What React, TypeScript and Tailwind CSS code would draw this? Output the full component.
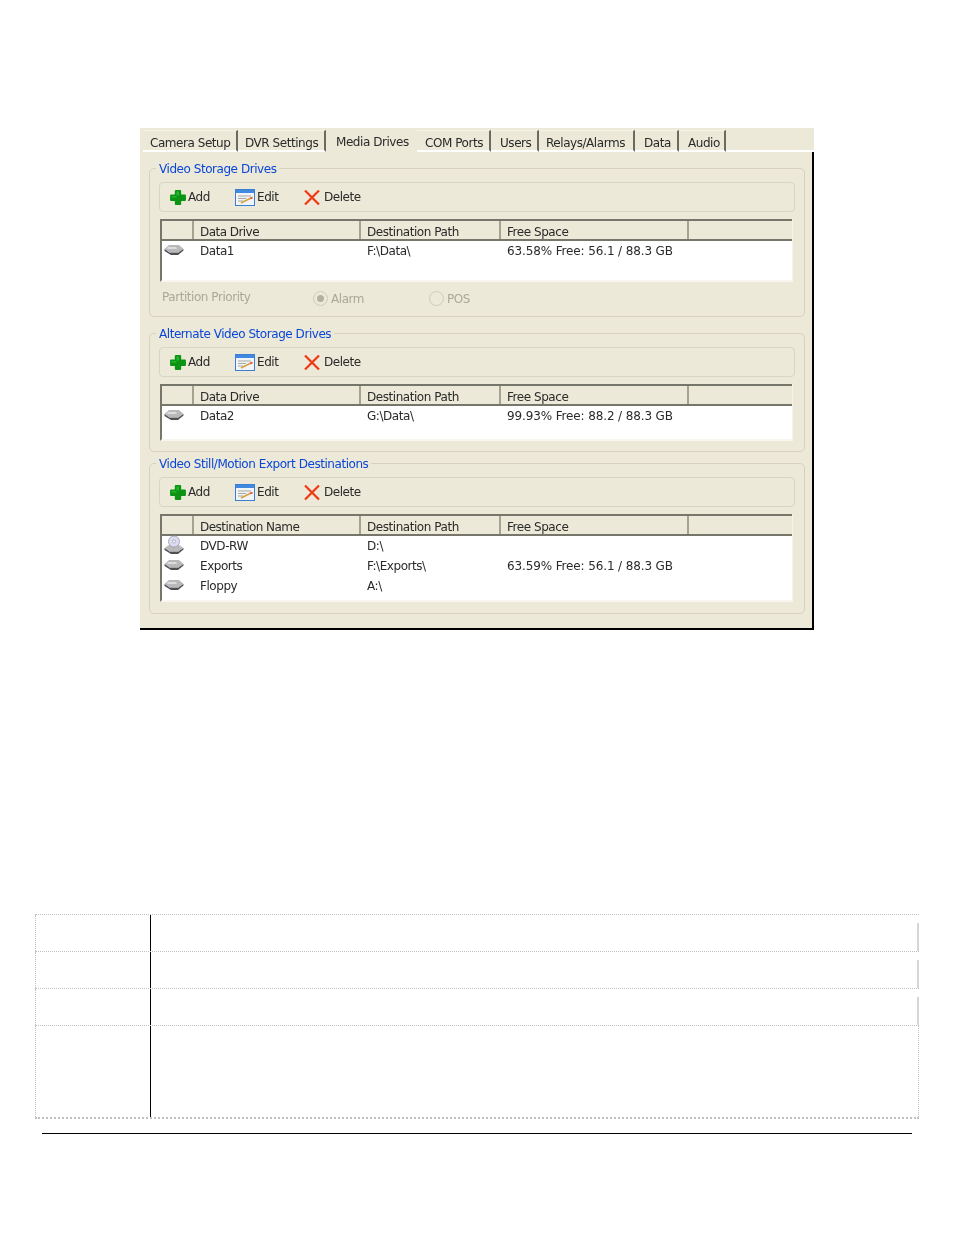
import type { ReactNode } from 'react';

const FONT = 'font-["DejaVu_Sans",sans-serif] text-[12px] tracking-[-0.45px]';

const TABS = [
  { label: 'Camera Setup', w: 'w-[95px]', pad: 'pl-[7px]' },
  { label: 'DVR Settings', w: 'w-[88px]', pad: 'pl-[7px]' },
  { label: 'Media Drives', w: 'w-[91px]', pad: 'pl-[10px]', active: true },
  { label: 'COM Ports', w: 'w-[74px]', pad: 'pl-[8px]' },
  { label: 'Users', w: 'w-[48px]', pad: 'pl-[9px]' },
  { label: 'Relays/Alarms', w: 'w-[96px]', pad: 'pl-[7px]' },
  { label: 'Data', w: 'w-[44px]', pad: 'pl-[9px]' },
  { label: 'Audio', w: 'w-[47px]', pad: 'pl-[9px]' },
];

function PlusIcon() {
  return (
    <svg width="18" height="17" viewBox="0 0 17 17" preserveAspectRatio="none">
      <path d="M6.500 1h4a1 1 0 0 1 1 1v3.500h3.500a1 1 0 0 1 1 1v4.500a1 1 0 0 1-1 1h-3.500v3a1 1 0 0 1-1 1h-4a1 1 0 0 1-1-1v-3H2a1 1 0 0 1-1-1V6.500a1 1 0 0 1 1-1h3.500V2a1 1 0 0 1 1-1z" fill="#0b9413" />
      <path d="M7 2.500h2.500v4H7zM2.500 7H7v1.500H2.500z" fill="#25b52c" />
    </svg>
  );
}

function EditIcon() {
  return (
    <svg width="20" height="17" viewBox="0 0 20 17">
      <rect x="0.5" y="0.5" width="19" height="16" fill="#f1f4f8" stroke="#3c7fd0" />
      <rect x="1" y="1" width="18" height="3" fill="#3f8ae0" />
      <path d="M3 7h13M3 9.500h8M3 12h5" stroke="#a8a8a0" strokeWidth="1" />
      <path d="M6 14l10-5" stroke="#d9a13a" strokeWidth="1.500" />
      <path d="M15.500 9.500l2-1" stroke="#e0402a" strokeWidth="1.500" />
    </svg>
  );
}

function DeleteIcon() {
  return (
    <svg width="18" height="17" viewBox="0 0 18 17">
      <path d="M2 1.500l14 14M16 1.500L2 15.500" stroke="#ec3a14" strokeWidth="2.200" fill="none" />
    </svg>
  );
}

function DriveIcon() {
  return (
    <svg width="20" height="12" viewBox="0 0 20 12">
      <path d="M0.500 5L5 1h10l4.500 4-4 3H5z" fill="#b9b9b9" />
      <path d="M4 3h8l1 2H3z" fill="#dcdcdc" />
      <path d="M0.500 5l5 3.500h9l5-3.500v1.500L14 11H7L0.500 7z" fill="#4e4f53" />
    </svg>
  );
}

function DvdIcon() {
  return (
    <svg width="20" height="20" viewBox="0 0 20 20">
      <path d="M0.500 13L5 10h10l4.500 3-4 3H5z" fill="#b9b9b9" />
      <path d="M0.500 13l5 3.500h9l5-3.500v1.500L14 19H7l-6.500-4z" fill="#4e4f53" />
      <circle cx="10" cy="6.500" r="5.500" fill="#dcdcf0" stroke="#9a9ab0" strokeWidth="0.800" />
      <circle cx="10" cy="6.500" r="1.500" fill="#fff" stroke="#8a8aa5" strokeWidth="0.600" />
    </svg>
  );
}

function Toolbar() {
  return (
    <div className="flex h-[30px] items-center rounded-[4px] border border-[#d9d5c3] pl-[9px] mx-[9px]">
      <span className="flex w-[66px] items-center gap-[1px]"><PlusIcon />Add</span>
      <span className="flex w-[68px] items-center gap-[2px]"><EditIcon />Edit</span>
      <span className="flex items-center gap-[3px]"><DeleteIcon />Delete</span>
    </div>
  );
}

type Row = { icon: ReactNode; name: string; path: string; free?: string };

function DriveList({ first, rows, height }: { first: string; rows: Row[]; height: string }) {
  const headCell = 'flex h-[18px] items-center border-r-2 border-[#a5a290] pl-[6px] pt-[3px]';
  return (
    <div className={`ml-[10px] mr-[11px] mt-[7px] flex flex-col border-l-2 border-[#77766b] border-r border-r-[#f6f4ea] border-b-2 border-b-[#f8f6ee] bg-white ${height}`}>
      <div className="flex border-t-2 border-b-2 border-[#77766b] bg-[#ece9d8]">
        <div className="flex h-[18px] w-[32px] border-r-2 border-[#a5a290]" />
        <div className={`${headCell} w-[167px] tracking-[-0.55px]`}>{first}</div>
        <div className={`${headCell} w-[140px]`}>Destination Path</div>
        <div className={`${headCell} w-[188px]`}>Free Space</div>
        <div className="flex-1" />
      </div>
      {rows.map((r) => (
        <div key={r.name} className="flex h-[20px] items-center">
          <div className="flex w-[32px] justify-center pr-[8px] -translate-y-[1px]">{r.icon}</div>
          <div className="w-[167px] pl-[6px]">{r.name}</div>
          <div className="w-[140px] pl-[6px]">{r.path}</div>
          <div className="pl-[6px] tracking-[-0.13px]">{r.free}</div>
        </div>
      ))}
    </div>
  );
}

function GroupBox({ title, height, mt, children }: { title: string; height: string; mt: string; children: ReactNode }) {
  return (
    <div className={`relative ${height} ${mt} ml-[9px] mr-[7px] rounded-[5px] border border-[#d6d2bf] pt-[13px]`}>
      <span className="absolute left-[6px] top-[-7px] bg-[#ece9d8] px-[3px] leading-[14px] text-[#0a46d8]">{title}</span>
      {children}
    </div>
  );
}

function Radio({ checked }: { checked?: boolean }) {
  return (
    <span className="flex h-[15px] w-[15px] items-center justify-center rounded-full border border-[#cfcbb9] bg-[#ece9d8]">
      {checked && <span className="h-[7px] w-[7px] rounded-full bg-[#b4b1a0]" />}
    </span>
  );
}

function InfoRow({ height }: { height: string }) {
  return (
    <div className={`flex ${height} border-b border-dotted border-[#c0c0c0]`}>
      <div className="w-[115px] border-l border-dotted border-[#c0c0c0]" />
      <div className="flex-1 border-l border-black" />
      <div className="mt-[8px] w-[2px] bg-[#d6d6d6]" />
    </div>
  );
}

export default function App() {
  return (
    <div className={`min-h-[1235px] w-[954px] bg-white pt-[128px] text-[#2a2a2a] ${FONT}`}>
      {/* settings window */}
      <div className="ml-[140px] flex h-[502px] w-[674px] flex-col bg-[#ece9d8] blur-[0.3px]">
        <div className="flex h-[24px] shrink-0 pl-[3px]">
          {TABS.map((t) => (
            <div
              key={t.label}
              className={`flex items-center ${t.w} ${t.pad} ${
                t.active
                  ? 'h-[25px] pt-[2px]'
                  : 'mt-[2px] h-[22px] border-t border-t-[#f6f4ea] border-r-2 border-r-[#6b6a60] border-b-2 border-b-white pt-[5px]'
              }`}
            >
              {t.label}
            </div>
          ))}
          <div className="mt-[22px] h-[2px] flex-1 bg-white" />
        </div>

        <div className="flex-1 border-r-2 border-b-2 border-black pt-[16px]">
          <GroupBox title="Video Storage Drives" height="h-[149px]" mt="">
            <Toolbar />
            <DriveList
              first="Data Drive"
              height="h-[63px]"
              rows={[{ icon: <DriveIcon />, name: 'Data1', path: 'F:\\Data\\', free: '63.58% Free: 56.1 / 88.3 GB' }]}
            />
            <div className="mt-[6px] flex h-[18px] items-center pl-[12px] text-[#aca899]">
              <span className="w-[151px]">Partition Priority</span>
              <span className="flex w-[116px] items-center gap-[3px] pt-[3px]"><Radio checked />Alarm</span>
              <span className="flex items-center gap-[3px] pt-[3px]"><Radio />POS</span>
            </div>
          </GroupBox>

          <GroupBox title="Alternate Video Storage Drives" height="h-[119px]" mt="mt-[16px]">
            <Toolbar />
            <DriveList
              first="Data Drive"
              height="h-[57px]"
              rows={[{ icon: <DriveIcon />, name: 'Data2', path: 'G:\\Data\\', free: '99.93% Free: 88.2 / 88.3 GB' }]}
            />
          </GroupBox>

          <GroupBox title="Video Still/Motion Export Destinations" height="h-[151px]" mt="mt-[11px]">
            <Toolbar />
            <DriveList
              first="Destination Name"
              height="h-[88px]"
              rows={[
                { icon: <DvdIcon />, name: 'DVD-RW', path: 'D:\\' },
                { icon: <DriveIcon />, name: 'Exports', path: 'F:\\Exports\\', free: '63.59% Free: 56.1 / 88.3 GB' },
                { icon: <DriveIcon />, name: 'Floppy', path: 'A:\\' },
              ]}
            />
          </GroupBox>
        </div>
      </div>

      {/* empty table below the screenshot */}
      <div className="ml-[35px] mt-[284px] w-[884px] border-t border-dotted border-[#c0c0c0]">
        <InfoRow height="h-[37px]" />
        <InfoRow height="h-[37px]" />
        <InfoRow height="h-[37px]" />
        <div className="flex h-[93px] border-x border-b-2 border-dotted border-[#c0c0c0]">
          <div className="w-[114px]" />
          <div className="flex-1 border-l border-black" />
        </div>
      </div>
      <div className="ml-[42px] mt-[14px] h-px w-[870px] bg-black" />
    </div>
  );
}
